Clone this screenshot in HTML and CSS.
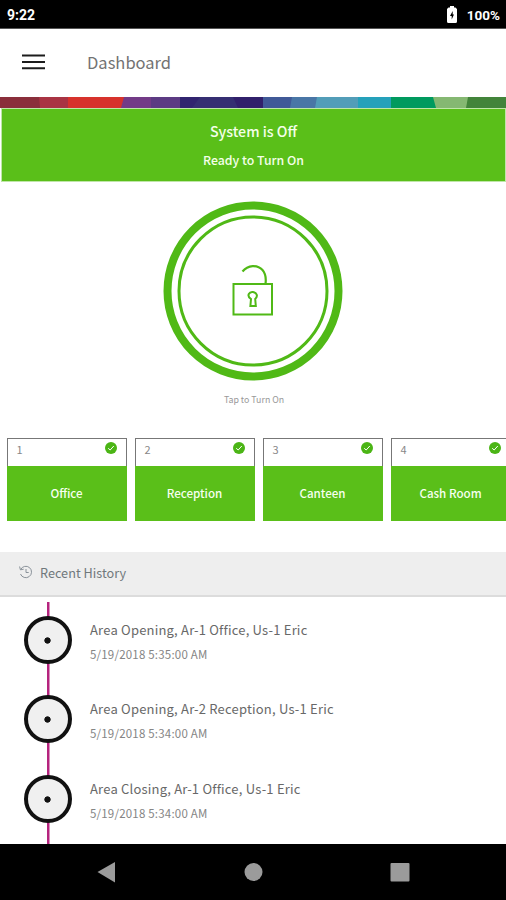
FILE: index.html
```html
<!DOCTYPE html>
<html lang="en">
<head>
<meta charset="utf-8">
<title>Dashboard</title>
<link rel="stylesheet" href="styles.css">
</head>
<body>
<div class="status">
  <span class="clock">9:22</span>
  <span class="status-right">
    <svg width="10" height="17" viewBox="0 0 10 17"><path d="M3 0h4v1.500h1.500L10 3V15.500Q10 17 8.500 17h-7Q0 17 0 15.500V3L1.500 1.500H3z" fill="#fff"/><path d="M5.700 5L3 10h1.700v3.500L7 8.500H5.700z" fill="#000"/></svg>
    <span>100%</span>
  </span>
</div>
<header class="bar">
  <svg class="menu" width="23" height="16" viewBox="0 0 23 16"><path d="M0 1.500h23M0 8h23M0 14.200h23" stroke="#1c1c1c" stroke-width="2"/></svg>
  <h1>Dashboard</h1>
</header>
<svg class="stripe" width="506" height="11" viewBox="0 0 506 11">
  <path d="M0 0h506v11H0z" fill="#42843a"/>
  <path d="M0 0h468l-2 11H0z" fill="#85b872"/>
  <path d="M0 0h433l3 11H0z" fill="#009a5e"/>
  <path d="M0 0h391v11H0z" fill="#25a1ba"/>
  <path d="M0 0h358v11H0z" fill="#529db8"/>
  <path d="M0 0h317l-2 11H0z" fill="#4976a6"/>
  <path d="M0 0h292l-2 11H0z" fill="#405997"/>
  <path d="M0 0h263v11H0z" fill="#31206b"/>
  <path d="M0 0h233l5 11H0z" fill="#352f72"/>
  <path d="M0 0h200l-8 11H0z" fill="#31246f"/>
  <path d="M0 0h180v11H0z" fill="#5c3b83"/>
  <path d="M0 0h151v11H0z" fill="#733b87"/>
  <path d="M0 0h124l-3 11H0z" fill="#d7322c"/>
  <path d="M0 0h68v11H0z" fill="#a93443"/>
  <path d="M0 0h39l1 11H0z" fill="#8a2f3b"/>
</svg>
<section class="banner">
  <p class="state">System is Off</p>
  <p class="ready">Ready to Turn On</p>
</section>
<section class="arm">
  <svg width="180" height="180" viewBox="0 0 180 180" fill="none" stroke="#50b916">
    <circle cx="90" cy="90" r="85.500" stroke-width="8"/>
    <circle cx="90" cy="90" r="74" stroke-width="3"/>
    <path d="M70.500 83h38.500v30.500H70.500z" stroke-width="2"/>
    <path d="M79.500 70.500c5.500-7 15-7 20-1.500 3.500 4 3.800 8 3 14" stroke-width="2.200"/>
    <path d="M88 98c-5-3.500-1.500-7.500 2-7s5.500 4 2.200 7l.6 7h-5.400z" stroke-width="2"/>
  </svg>
  <p>Tap to Turn On</p>
</section>
<section class="areas">
  <div class="area"><div class="top"><span>1</span><svg width="12" height="12" viewBox="0 0 12 12"><circle cx="6" cy="6" r="6" fill="#4bb515"/><path d="M3.200 6.300l2 1.700 3.600-4" fill="none" stroke="#fff"/></svg></div><div class="name">Office</div></div>
  <div class="area"><div class="top"><span>2</span><svg width="12" height="12" viewBox="0 0 12 12"><circle cx="6" cy="6" r="6" fill="#4bb515"/><path d="M3.200 6.300l2 1.700 3.600-4" fill="none" stroke="#fff"/></svg></div><div class="name">Reception</div></div>
  <div class="area"><div class="top"><span>3</span><svg width="12" height="12" viewBox="0 0 12 12"><circle cx="6" cy="6" r="6" fill="#4bb515"/><path d="M3.200 6.300l2 1.700 3.600-4" fill="none" stroke="#fff"/></svg></div><div class="name">Canteen</div></div>
  <div class="area"><div class="top"><span>4</span><svg width="12" height="12" viewBox="0 0 12 12"><circle cx="6" cy="6" r="6" fill="#4bb515"/><path d="M3.200 6.300l2 1.700 3.600-4" fill="none" stroke="#fff"/></svg></div><div class="name">Cash Room</div></div>
</section>
<div class="heading">
  <svg width="13" height="14" viewBox="0 0 13 14" fill="none" stroke="#8a929a"><path d="M1.700 4.500A5.700 5.700 0 1 1 1.500 9M.6 1.500l.8 3.300 3.300-.6M7 4v3.500h2.700"/></svg>
  <h2>Recent History</h2>
</div>
<section class="history">
  <div class="event"><div class="rail"><i class="node"></i></div><div class="text"><p class="what">Area Opening, Ar-1 Office, Us-1 Eric</p><p class="when">5/19/2018 5:35:00 AM</p></div></div>
  <div class="event"><div class="rail"><i class="node"></i></div><div class="text"><p class="what">Area Opening, Ar-2 Reception, Us-1 Eric</p><p class="when">5/19/2018 5:34:00 AM</p></div></div>
  <div class="event"><div class="rail"><i class="node"></i></div><div class="text"><p class="what">Area Closing, Ar-1 Office, Us-1 Eric</p><p class="when">5/19/2018 5:34:00 AM</p></div></div>
  <div class="event"><div class="rail"></div></div>
</section>
<nav class="nav">
  <svg width="506" height="56" viewBox="0 0 506 56" fill="#9b9b9b"><path d="M97.500 28L115 18v20.500z"/><circle cx="253.500" cy="28" r="9"/><rect x="390.500" y="19" width="19" height="18.500" rx="1"/></svg>
</nav>
</body>
</html>
```

FILE: styles.css
```css
* { box-sizing: border-box; margin: 0; padding: 0; }
body {
  width: 506px; height: 900px; overflow: hidden;
  display: flex; flex-direction: column;
  background: #fff; color: #666;
  font-family: "Noto Sans CJK SC", "Noto Sans", sans-serif;
}
body > * { flex: none; }
svg { display: block; }
.status {
  height: 29px; padding: 2px 6px 0 7px; background: #000; color: #fff;
  display: flex; align-items: center; justify-content: space-between;
  font: 700 13.500px/28px Roboto, sans-serif;
  border-bottom: 1px solid #555;
}
.clock { font-size: 14px; }
.status-right { display: flex; align-items: center; gap: 10px; }
.status-right svg { margin-bottom: 1px; }
.bar { height: 68px; display: flex; align-items: center; padding: 0 0 2px 22px; }
.bar h1 { margin-left: 42px; font-size: 16.500px; line-height: 26px; font-weight: 400; color: #737373; }
.banner {
  height: 74px; margin: 0 0 0 1px; padding-top: 9px;
  background: #5abf19; border: 1px solid #bfe6a8; color: #f4ffe9; text-align: center;
}
.state { font-size: 14.200px; line-height: 27px; font-weight: 500; }
.ready { font-size: 12.300px; line-height: 30px; font-weight: 500; }
.arm { height: 256px; padding-top: 19px; display: flex; flex-direction: column; align-items: center; }
.arm p { margin-top: 10px; padding-left: 2px; font-size: 8.800px; line-height: 18px; color: #999; }
.areas { height: 114px; padding-left: 6.500px; display: flex; gap: 8px; overflow: hidden; }
.area { flex: none; width: 120px; height: 84px; }
.top {
  height: 28px; padding: 3px 9px 0 9px; border: 1px solid #777; border-bottom: 0;
  display: flex; justify-content: space-between; font-size: 11px; line-height: 14px; color: #888;
}
.name {
  height: 55px; background: #5abf19; color: #f6ffef; text-align: center;
  font-size: 11.600px; line-height: 55px; font-weight: 500;
}
.heading {
  height: 45px; background: #eee; border-bottom: 2px solid #dcdcdc;
  display: flex; align-items: center; padding-left: 19px;
}
.heading svg { margin-bottom: 3px; }
.heading h2 { margin-left: 8px; padding-bottom: 1px; font-size: 12.700px; line-height: 20px; font-weight: 400; color: #70787c; }
.history { height: 247px; padding-top: 5px; overflow: hidden; }
.event { display: flex; height: 79.300px; }
.rail {
  width: 97px; padding: 14px 0 0 24px;
  background: linear-gradient(#b5247e, #b5247e) 47px 0 / 2.500px 100% no-repeat;
}
.node {
  display: block; width: 48px; height: 48px; border: 4px solid #111; border-radius: 50%;
  background: radial-gradient(circle at 19.500px 20.500px, #111 2.800px, #f0f0f0 3.500px);
}
.text { margin-left: -7px; padding-top: 16px; white-space: nowrap; }
.what { font-size: 13px; letter-spacing: .2px; line-height: 24px; color: #686868; }
.when { font-size: 11.500px; letter-spacing: .2px; line-height: 24px; color: #858585; }
.nav { height: 56px; background: #000; }
```
